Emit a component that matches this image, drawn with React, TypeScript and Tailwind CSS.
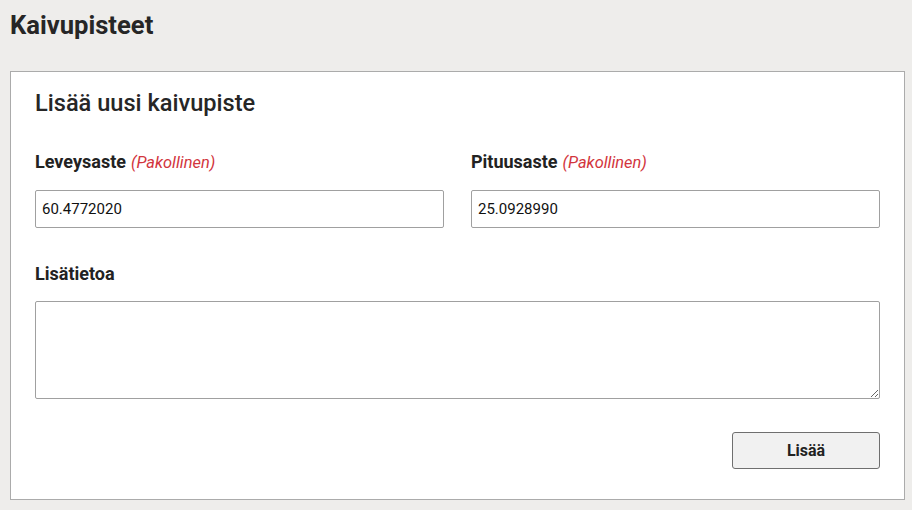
import { useState } from "react";

function FieldLabel({ text, required }: { text: string; required?: boolean }) {
  return (
    <label className="block text-[18px] leading-[24px] font-bold text-[#222]">
      {text}
      {required ? <span className="ml-[5px] text-[16.4px] font-normal italic text-[#d2353d]">(Pakollinen)</span> : null}
    </label>
  );
}

export default function App() {
  const [lat, setLat] = useState("60.4772020");
  const [lon, setLon] = useState("25.0928990");
  const [info, setInfo] = useState("");

  return (
    <div className="min-h-screen bg-[#eeedeb] pl-[10px] pt-[10px] text-[#222]" style={{ fontFamily: "Roboto, 'Liberation Sans', sans-serif" }}>
      <h1 className="text-[25.6px] leading-[30px] font-bold text-[#262626]">Kaivupisteet</h1>

      <div className="mt-[31px] w-[895px] border border-[#ababab] bg-white px-6 pt-[17px] pb-[30px]">
        <h2 className="text-[23.6px] leading-[28px] font-medium text-[#262626]">Lisää uusi kaivupiste</h2>

        <div className="mt-[33px] grid grid-cols-2 gap-[27px]">
          <div>
            <FieldLabel text="Leveysaste" required />
            <input
              value={lat}
              onChange={(e) => setLat(e.target.value)}
              className="mt-[15px] block h-[38px] w-full rounded-[2px] border border-[#a0a0a0] px-[6px] text-[15px] text-[#111] outline-none"
            />
          </div>
          <div>
            <FieldLabel text="Pituusaste" required />
            <input
              value={lon}
              onChange={(e) => setLon(e.target.value)}
              className="mt-[15px] block h-[38px] w-full rounded-[2px] border border-[#a0a0a0] px-[6px] text-[15px] text-[#111] outline-none"
            />
          </div>
        </div>

        <div className="mt-[34px]">
          <FieldLabel text="Lisätietoa" />
          <textarea
            value={info}
            onChange={(e) => setInfo(e.target.value)}
            className="mt-[15px] block h-[98px] w-full rounded-[2px] border border-[#a0a0a0] px-[6px] py-[6px] text-[15px] outline-none"
          />
        </div>

        <div className="mt-[33px] flex justify-end">
          <button className="h-[37px] w-[148px] rounded-[3px] border border-[#6f6f6f] bg-[#f1f1f1] text-[16px] font-bold text-[#222]">
            Lisää
          </button>
        </div>
      </div>
    </div>
  );
}
